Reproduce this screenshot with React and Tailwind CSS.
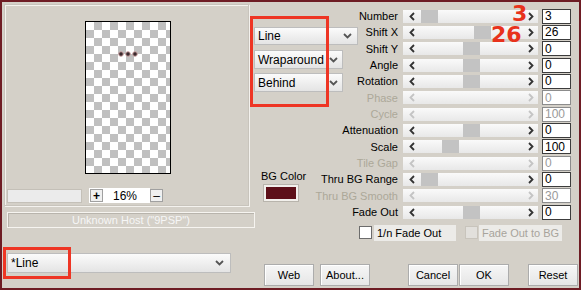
const ROWS = [
  { label: 'Number', value: '3', thumb: 18 },
  { label: 'Shift X', value: '26', thumb: 71 },
  { label: 'Shift Y', value: '0', thumb: 60 },
  { label: 'Angle', value: '0', thumb: 60 },
  { label: 'Rotation', value: '0', thumb: 60 },
  { label: 'Phase', value: '0', disabled: true },
  { label: 'Cycle', value: '100', disabled: true },
  { label: 'Attenuation', value: '0', thumb: 60 },
  { label: 'Scale', value: '100', thumb: 39 },
  { label: 'Tile Gap', value: '0', disabled: true },
  { label: 'Thru BG Range', value: '0', thumb: 18 },
  { label: 'Thru BG Smooth', value: '30', disabled: true },
  { label: 'Fade Out', value: '0', thumb: 60 },
];

function Chevron() {
  return (
    <svg width="9" height="6" viewBox="0 0 9 6" className="shrink-0">
      <path d="M1 1l3.5 3.5L8 1" fill="none" stroke="#555" strokeWidth="1.8" />
    </svg>
  );
}

function Arrow({ dir, color }) {
  const d = dir === 'left' ? 'M5 1L1.5 4.5L5 8' : 'M1 1L4.5 4.5L1 8';
  return (
    <svg width="6" height="9" viewBox="0 0 6 9" className="shrink-0">
      <path d={d} fill="none" stroke={color} strokeWidth="1.8" />
    </svg>
  );
}

function Select({ value, className }) {
  return (
    <div
      className={`flex items-center justify-between border border-[#bdbdbd] bg-gradient-to-b from-[#fbfbfb] to-[#e4e4e4] pl-[3px] pr-[4px] ${className}`}
    >
      <span>{value}</span>
      <Chevron />
    </div>
  );
}

function Slider({ thumb, disabled }) {
  const arrow = disabled ? '#c4c4c4' : '#333';
  return (
    <div className="relative flex items-center justify-between h-[13px] bg-gradient-to-b from-[#fafafa] to-[#e8e8e8] pl-[6px] pr-[4px]">
      <Arrow dir="left" color={arrow} />
      {!disabled && (
        <div className="absolute top-0 h-[13px] w-[17px] bg-[#c3c3c3]" style={{ left: thumb }} />
      )}
      <Arrow dir="right" color={arrow} />
    </div>
  );
}

function Button({ children, className }) {
  return (
    <div
      className={`flex items-center justify-center h-[22px] w-[50px] border border-[#acacac] bg-gradient-to-b from-[#f6f6f6] to-[#e6e6e6] shadow-[inset_1px_1px_0_#fff] ${className}`}
    >
      {children}
    </div>
  );
}

export default function App() {
  return (
    <div className="relative flex w-[581px] h-[290px] overflow-hidden border-2 border-[#6e1c24] bg-[#d4d0c8] font-['Liberation_Sans',Arial,sans-serif] text-[11px] text-black">
      {/* Left: preview */}
      <div className="flex flex-col w-[252px] shrink-0">
        <div className="ml-[2px] mt-[2px] w-[245px] h-[202px] border border-[#c8c4bc] shadow-[inset_1px_1px_0_#f4f2ee,1px_1px_0_#f4f2ee]">
          <div className="ml-[80px] mt-[16px] w-[86px] h-[153px] border border-black bg-[repeating-conic-gradient(#c0c0c0_0_25%,#ffffff_0_50%)] bg-[length:16px_16px]">
            <svg width="84" height="151">
              {[35, 42, 49].map((x) => (
                <circle key={x} cx={x} cy={32} r="2.3" fill="#3a2a2e" stroke="#c9a0a0" strokeWidth="1" />
              ))}
            </svg>
          </div>
          <div className="flex items-center mt-[14px] ml-[2px]">
            <div className="w-[75px] h-[14px] border border-[#c4c0b8] bg-[#ebebeb]" />
            <div className="ml-[7px] flex items-center w-[61px] h-[15px] bg-white">
              <div className="flex items-center justify-center ml-[1px] w-[13px] h-[13px] border border-[#a0a0a0] bg-[#f0f0f0] text-[12px] font-bold leading-none">
                +
              </div>
              <span className="ml-[10px] text-[12px]">16%</span>
            </div>
            <div className="flex items-center justify-center w-[13px] h-[13px] border border-[#a0a0a0] bg-[#f0f0f0] text-[12px] leading-none">
              –
            </div>
          </div>
        </div>
        <div className="ml-[5px] mt-[6px] flex items-center justify-center w-[248px] h-[16px] border border-[#f6f4f0] shadow-[inset_1px_1px_0_#b8b4ac] text-[#f6f6f6]">
          Unknown Host ("9PSP")
        </div>
        <Select value="*Line" className="ml-[5px] mt-[25px] w-[224px] h-[20px] text-[12px] pr-[6px]" />
      </div>

      {/* Right: controls */}
      <div className="flex flex-col grow">
        <div className="flex">
          <div className="flex flex-col w-[106px] shrink-0">
            <Select value="Line" className="mt-[25px] w-[104px] h-[18px] pr-[5px] text-[12px]" />
            <Select value="Wraparound" className="mt-[5px] w-[89px] h-[19px] text-[12px]" />
            <Select value="Behind" className="mt-[4px] w-[89px] h-[19px] text-[12px]" />
            <span className="mt-[78px] ml-[7px] leading-[13px]">BG Color</span>
            <div className="mt-[2px] ml-[10px] w-[34px] h-[16px] border-2 border-[#f2f0ec] shadow-[0_0_0_1px_#b8b4ac] bg-[#5e1019]" />
          </div>
          <div className="mt-[6px] grid grid-cols-[38px_140px_33px] auto-rows-[16.33px]">
            {ROWS.map((r) => (
              <div key={r.label} className="contents">
                <div
                  className={`flex items-center justify-end whitespace-nowrap ${r.disabled ? 'text-[#aca899]' : ''}`}
                >
                  {r.label}
                </div>
                <div className="flex items-center pl-[5px]">
                  <div className="w-[135px]">
                    <Slider thumb={r.thumb} disabled={r.disabled} />
                  </div>
                </div>
                <div className="flex items-center pl-[4px]">
                  <div
                    className={`flex items-center w-[29px] h-[15px] pl-[2px] bg-white border text-[12px] ${
                      r.disabled ? 'border-[#8c8c8c] text-[#9a9a9a]' : 'border-[#3c3c3c]'
                    }`}
                  >
                    {r.value}
                  </div>
                </div>
              </div>
            ))}
          </div>
        </div>

        <div className="flex items-center mt-[5px] h-[15px]">
          <div className="ml-[105px] w-[13px] h-[13px] bg-white border border-[#6c6c6c]" />
          <span className="ml-[2px] w-[82px] pl-[3px] bg-[#ecebe8]">1/n Fade Out</span>
          <div className="ml-[9px] w-[13px] h-[13px] bg-[#e2e0dc] border border-[#c8c4bc]" />
          <span className="ml-[1px] w-[83px] pl-[3px] bg-[#ecebe8] text-[#a8a49c]">Fade Out to BG</span>
        </div>

        <div className="flex mt-[24px]">
          <Button className="ml-[10px]">Web</Button>
          <Button className="ml-[6px]">About...</Button>
          <Button className="ml-[38px]">Cancel</Button>
          <Button className="ml-[1px] border-[#7ea6d2] shadow-[inset_0_0_0_1px_#cfe0f2]">OK</Button>
          <Button className="ml-[19px]">Reset</Button>
        </div>
      </div>

      {/* Annotations */}
      <div className="absolute left-[248px] top-[14px] w-[79px] h-[91px] border-[3px] border-[#ee3524]" />
      <div className="absolute left-[1px] top-[245px] w-[68px] h-[32px] border-[3px] border-[#ee3524]" />
      <span className="absolute left-[510px] top-[3px] h-[18px] font-['DejaVu_Sans',sans-serif] text-[22px] font-bold leading-[18px] text-[#e8321c]">
        3
      </span>
      <span className="absolute left-[489px] top-[24px] h-[18px] font-['DejaVu_Sans',sans-serif] text-[22px] font-bold leading-[18px] text-[#e8321c]">
        26
      </span>
    </div>
  );
}
